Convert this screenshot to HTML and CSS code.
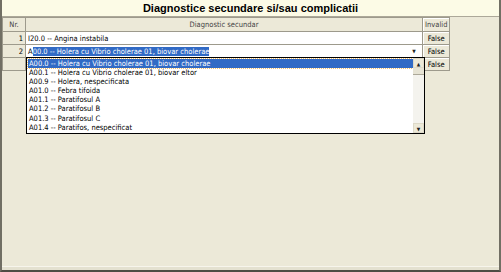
FILE: index.html
```html
<!DOCTYPE html>
<html>
	<head>
		<meta charset="utf-8" />
		<title>Diagnostice secundare</title>
		<link rel="stylesheet" href="styles.css">
	</head>
	<body>
		<div class="frame">
			<div class="title">Diagnostice secundare si/sau complicatii</div>
			<div class="grid-wrap">
				<table class="grid">
					<tr>
						<th class="nr">Nr.</th>
						<th class="diag">Diagnostic secundar</th>
						<th class="inv">Invalid</th>
					</tr>
					<tr>
						<td class="nr">1</td>
						<td class="diag">I20.0 -- Angina instabila</td>
						<td class="inv">False</td>
					</tr>
					<tr>
						<td class="nr">2</td>
						<td class="diag combo-cell">
							<div class="combo">
								<span class="combo-text">A<span class="sel">00.0 -- Holera cu Vibrio cholerae 01, biovar cholerae</span></span>
								<span class="arrow">&#9660;</span>
							</div>
						</td>
						<td class="inv">False</td>
					</tr>
					<tr>
						<td class="nr"></td>
						<td class="diag empty"></td>
						<td class="inv">False</td>
					</tr>
				</table>

				<div class="droplist">
					<ul class="items">
						<li class="current">A00.0 -- Holera cu Vibrio cholerae 01, biovar cholerae</li>
						<li>A00.1 -- Holera cu Vibrio cholerae 01, biovar eltor</li>
						<li>A00.9 -- Holera, nespecificata</li>
						<li>A01.0 -- Febra tifoida</li>
						<li>A01.1 -- Paratifosul A</li>
						<li>A01.2 -- Paratifosul B</li>
						<li>A01.3 -- Paratifosul C</li>
						<li>A01.4 -- Paratifos, nespecificat</li>
					</ul>
					<div class="scroll">
						<div class="sbtn">&#9650;</div>
						<div class="thumb"></div>
						<div class="track"></div>
						<div class="sbtn">&#9660;</div>
					</div>
				</div>
			</div>
			<div class="bottom-line"></div>
		</div>
	</body>
</html>
```

FILE: styles.css
```css
body
{
	margin: 0;
	font-family: "Liberation Sans", Arial, sans-serif;
	background: #ece9d8;
}
.frame
{
	width: 501px;
	height: 272px;
	box-sizing: border-box;
	border-left: 2px solid #716f64;
	border-right: 2px solid #716f64;
	border-bottom: 2px solid #4e4c44;
	background: #ece9d8;
	display: flex;
	flex-direction: column;
}
.title
{
	height: 16px;
	line-height: 16px;
	background: #fcfbe6;
	border-bottom: 1px solid #aca899;
	text-align: center;
	font-size: 11px;
	font-weight: bold;
	color: #000;
}
.grid-wrap
{
	position: relative;
	flex: 1;
}
.bottom-line
{
	height: 3px;
	border-top: 1px solid #f7f5ec;
	background: #e4e1d0;
}
.grid, .droplist
{
	font-family: "DejaVu Sans Condensed", "DejaVu Sans", sans-serif;
	font-stretch: condensed;
	font-size: 7.5px;
}
.grid
{
	border-collapse: collapse;
	table-layout: fixed;
	color: #000;
}
.grid th, .grid td
{
	height: 12px;
	padding: 0 2px;
	border: 1px solid #9d9a8c;
	white-space: nowrap;
	overflow: hidden;
}
.grid th
{
	font-weight: normal;
	height: 13px;
	background: #ece9d8;
	color: #444;
}
.grid .nr
{
	width: 18px;
	background: #ece9d8;
}
.grid td.nr
{
	text-align: right;
}
.grid .diag
{
	width: 392px;
	background: #fff;
}
.grid th.diag
{
	background: #ece9d8;
}
.grid .inv
{
	width: 22px;
	text-align: center;
	background: #ece9d8;
	box-shadow: inset 1px 1px 0 #fff;
}
.combo-cell
{
	padding: 0 0 0 1px;
}
.combo
{
	display: flex;
	align-items: center;
	height: 12px;
}
.combo-text
{
	flex: 1;
}
.sel
{
	background: #316ac5;
	color: #fff;
}
.arrow
{
	width: 12px;
	font-size: 5px;
	text-align: center;
	color: #222;
}
.droplist
{
	position: absolute;
	left: 24px;
	top: 40px;
	width: 397px;
	height: 75px;
	border: 1px solid #000;
	background: #fff;
	display: flex;
}
.items
{
	flex: 1;
	list-style: none;
	margin: 0;
	padding: 1px 0 0 1px;
}
.items li
{
	height: 9.1px;
	line-height: 9.1px;
	padding-left: 1px;
}
.items .current
{
	background: #316ac5;
	color: #fff;
	outline: 1px dotted #f5c06a;
}
.scroll
{
	width: 11px;
	display: flex;
	flex-direction: column;
	background: #f4f3ee;
}
.sbtn
{
	height: 10px;
	line-height: 10px;
	font-size: 5px;
	text-align: center;
	background: #ece9d8;
	color: #222;
	border: 1px solid #ddd9c8;
	box-sizing: border-box;
}
.thumb
{
	height: 6px;
	background: #e6e3d4;
	border-bottom: 1px solid #aca899;
}
.track
{
	flex: 1;
}
```
